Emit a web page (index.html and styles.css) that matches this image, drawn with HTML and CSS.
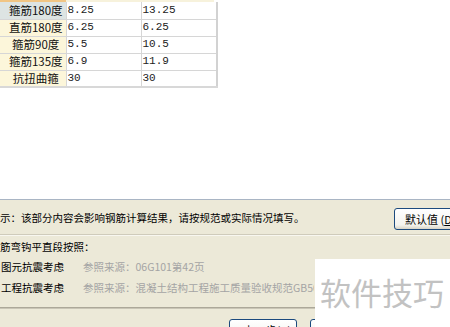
FILE: index.html
```html
<!DOCTYPE html>
<html lang="zh-CN">
<head>
    <meta charset="UTF-8">
    <title>钢筋弯钩设置</title>
    <link rel="stylesheet" href="styles.css">
</head>
<body>

    <!-- Hook length table -->
    <div class="sheet">
        <div class="head-strip"><span class="hs-label"></span><span class="hs-data"></span></div>
        <table class="rebar">
            <tr class="sel"><th>箍筋180度</th><td>8.25</td><td>13.25</td></tr>
            <tr><th>直筋180度</th><td>6.25</td><td>6.25</td></tr>
            <tr><th>箍筋90度</th><td>5.5</td><td>10.5</td></tr>
            <tr><th>箍筋135度</th><td>6.9</td><td>11.9</td></tr>
            <tr><th>抗扭曲箍</th><td>30</td><td>30</td></tr>
        </table>
    </div>

    <!-- Settings panel -->
    <div class="panel">
        <div class="info">
            <span class="info-text">提示：该部分内容会影响钢筋计算结果，请按规范或实际情况填写。</span>
            <button class="btn btn-default">默认值 (<u>D</u>)</button>
        </div>
        <div class="options">
            <div class="opt-title">箍筋弯钩平直段按照：</div>
            <div class="opt-row">
                <span class="opt-label">图元抗震考虑</span>
                <span class="opt-ref">参照来源：06G101第42页</span>
            </div>
            <div class="opt-row">
                <span class="opt-label">工程抗震考虑</span>
                <span class="opt-ref">参照来源：混凝土结构工程施工质量验收规范GB50204-2002</span>
            </div>
        </div>
        <div class="footer">
            <button class="btn btn-prev">&lt; 上一步(<u>B</u>)</button>
            <button class="btn btn-next">下一步(<u>N</u>) &gt;</button>
        </div>
    </div>

    <div class="watermark">软件技巧</div>

</body>
</html>
```

FILE: styles.css
```css
body { margin: 0; width: 450px; height: 327px; overflow: hidden; position: relative; background: #fff; font-family: "Noto Sans CJK SC", "Liberation Sans", sans-serif; color: #000; }

.sheet { height: 199px; }
.head-strip { display: flex; height: 2px; }
.hs-label { width: 66px; background: #f1c584; }
.hs-data { width: 148px; background: #f7f2dc; }

.rebar { border-collapse: collapse; table-layout: fixed; width: 215px; }
.rebar tr { height: 17px; }
.rebar th, .rebar td { border: 1px solid #d6d6d6; padding: 0; line-height: 15px; }
.rebar th { width: 66px; border-left: none; background: #fcf6da; font-size: 11.5px; font-weight: normal; text-align: center; padding-left: 6px; box-sizing: border-box; color: #111; }
.rebar tr.sel th { background: #dde4e3; }
.rebar td { width: 73px; font-family: "Liberation Mono", monospace; font-size: 11px; padding-left: 1px; color: #222; }
.rebar td:last-child { border-right: 2px solid #d2d2d2; }
.rebar tr:first-child th, .rebar tr:first-child td { border-top: none; }
.rebar tr:last-child th, .rebar tr:last-child td { border-bottom: 2px solid #d8d8d8; }

.panel { height: 127px; border-top: 1px solid #a9b5c4; background: #ece9d8; font-size: 10.5px; }
.info { display: flex; align-items: center; height: 34px; border-bottom: 1px solid #cfcbbb; box-shadow: 0 1px 0 #f8f7f0; }
.info-text { margin-left: -10.5px; white-space: nowrap; }
.btn { font-family: inherit; font-size: 11px; color: #000; height: 22px; padding: 0 10px; border: 1px solid #1c4a7e; border-radius: 3px; background: linear-gradient(#ffffff, #f4f3ee 80%, #d8d4c6); white-space: nowrap; }
.btn-default { margin-left: auto; margin-right: -40px; margin-top: 3px; width: 96px; text-align: left; }

.options { padding-top: 2px; height: 70px; }
.opt-title { margin-left: -10.5px; line-height: 20px; }
.opt-row { display: flex; line-height: 20.5px; white-space: nowrap; }
.opt-label { width: 83px; padding-left: 1px; box-sizing: border-box; }
.opt-ref { color: #a4a4a4; max-width: 231px; overflow: hidden; }

.footer { border-top: 1px solid #aca899; box-shadow: inset 0 1px 0 #c9c5b6; display: flex; gap: 13px; padding: 11px 0 0 229px; }
.btn-prev, .btn-next { width: 68px; padding: 0; }

.watermark { position: absolute; left: 315px; top: 259px; width: 135px; height: 68px; background: #fff; color: #c2c2c2; font-size: 31px; line-height: 66px; padding-left: 5px; box-sizing: border-box; white-space: nowrap; }
```
